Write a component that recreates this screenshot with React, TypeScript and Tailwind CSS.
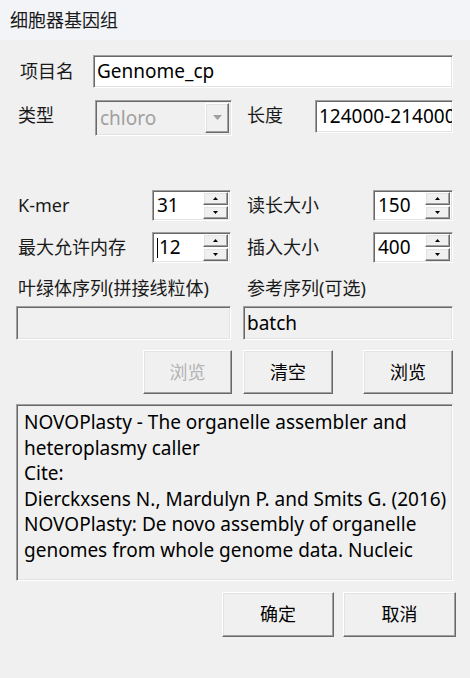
import React from "react";

const FONT = { fontFamily: '"Noto Sans", "Noto Sans CJK SC", sans-serif' };

const sunken =
  "border border-t-[#a0a0a0] border-l-[#a0a0a0] border-b-white border-r-white shadow-[inset_1px_1px_0_#696969,inset_-1px_-1px_0_#e3e3e3]";
const raised =
  "border border-t-white border-l-white border-b-[#696969] border-r-[#696969] shadow-[inset_-1px_-1px_0_#a0a0a0,inset_1px_1px_0_#e3e3e3] bg-[#f0f0f0]";

const Arrow = ({ up, color = "#000", w = 5 }: { up?: boolean; color?: string; w?: number }) => (
  <svg width={w} height={Math.ceil(w / 2) + 1} viewBox={`0 0 ${w} ${Math.ceil(w / 2) + 1}`}>
    {up ? (
      <polygon points={`0,${Math.ceil(w / 2)} ${w},${Math.ceil(w / 2)} ${w / 2},0`} fill={color} />
    ) : (
      <polygon points={`0,0 ${w},0 ${w / 2},${Math.ceil(w / 2)}`} fill={color} />
    )}
  </svg>
);

const Spin = ({ value, width, caret }: { value: string; width: string; caret?: boolean }) => (
  <div className={`${sunken} ${width} h-[31px] bg-white flex items-center pl-[4px] pr-[2px]`}>
    <div className="flex-1 flex items-center text-[19px] text-black leading-none">
      {caret && <span className="w-px h-[20px] bg-black mr-[1px]" />}
      {value}
    </div>
    <div className="flex flex-col gap-px">
      <div className={`${raised} w-[25px] h-[13px] flex items-center justify-center`}>
        <Arrow up />
      </div>
      <div className={`${raised} w-[25px] h-[13px] flex items-center justify-center`}>
        <Arrow />
      </div>
    </div>
  </div>
);

export default function App() {
  return (
    <div className="w-[470px] h-[678px] bg-[#f0f0f0] text-[#1a1a1a] overflow-hidden" style={FONT}>
      {/* title bar */}
      <div className="h-[40px] bg-[#f3f4f8] flex items-center pl-[10px] text-[18px]">细胞器基因组</div>

      {/* project name */}
      <div className="flex items-center mt-[15px] pl-[20px] h-[33px]">
        <span className="w-[73px] text-[18px]">项目名</span>
        <div className={`${sunken} w-[360px] h-[33px] bg-white flex items-center pl-[3px] text-[19px] text-black`}>
          Gennome_cp
        </div>
      </div>

      {/* type / length */}
      <div className="flex items-start mt-[12px] pl-[18px] h-[36px]">
        <span className="w-[77px] text-[18px] leading-[30px]">类型</span>
        <div className={`${sunken} w-[137px] h-[36px] bg-[#f0f0f0] flex items-center pl-[4px] pr-[2px]`}>
          <span className="flex-1 text-[19px] text-[#a0a0a0]">chloro</span>
          <div className={`${raised} w-[24px] h-[30px] flex items-center justify-center`}>
            <Arrow color="#a0a0a0" w={9} />
          </div>
        </div>
        <span className="ml-[15px] w-[68px] text-[18px] leading-[30px]">长度</span>
        <div className={`${sunken} w-[138px] h-[33px] bg-white flex items-center pl-[3px] text-[19px] text-black overflow-hidden whitespace-nowrap`}>
          124000-214000
        </div>
      </div>

      {/* kmer / read length */}
      <div className="flex items-center mt-[54px] pl-[18px] h-[31px]">
        <span className="w-[134px] text-[18px]">K-mer</span>
        <Spin value="31" width="w-[79px]" />
        <span className="ml-[16px] w-[126px] text-[18px]">读长大小</span>
        <Spin value="150" width="w-[80px]" />
      </div>

      {/* memory / insert size */}
      <div className="flex items-center mt-[11px] pl-[18px] h-[31px]">
        <span className="w-[134px] text-[18px]">最大允许内存</span>
        <Spin value="12" width="w-[79px]" caret />
        <span className="ml-[16px] w-[126px] text-[18px]">插入大小</span>
        <Spin value="400" width="w-[80px]" />
      </div>

      {/* sequence labels */}
      <div className="flex items-center mt-[13px] pl-[18px] h-[24px] text-[18px]">
        <span className="w-[229px]">叶绿体序列(拼接线粒体)</span>
        <span>参考序列(可选)</span>
      </div>

      {/* sequence inputs */}
      <div className="flex mt-[6px] pl-[16px] gap-[12px] h-[34px]">
        <div className={`${sunken} w-[215px] h-[34px] bg-[#f0f0f0]`} />
        <div className={`${sunken} w-[210px] h-[34px] bg-[#f0f0f0] flex items-center pl-[3px] text-[19px] text-black`}>
          batch
        </div>
      </div>

      {/* browse buttons */}
      <div className="flex mt-[10px] pl-[143px] h-[44px] text-[18px]">
        <button className={`${raised} w-[89px] h-[44px] text-[#b4b4b4]`}>浏览</button>
        <button className={`${raised} ml-[11px] w-[90px] h-[44px] text-black`}>清空</button>
        <button className={`${raised} ml-[30px] w-[90px] h-[44px] text-black`}>浏览</button>
      </div>

      {/* info text */}
      <div className={`${sunken} mt-[10px] ml-[16px] w-[437px] h-[177px] bg-[#f0f0f0] pl-[7px] pt-[5px] text-[19px] leading-[25.5px] text-black`}>
        NOVOPlasty - The organelle assembler and
        <br />
        heteroplasmy caller
        <br />
        Cite:
        <br />
        Dierckxsens N., Mardulyn P. and Smits G. (2016)
        <br />
        NOVOPlasty: De novo assembly of organelle
        <br />
        genomes from whole genome data. Nucleic
      </div>

      {/* ok / cancel */}
      <div className="flex mt-[11px] pl-[222px] h-[45px] text-[18px]">
        <button className={`${raised} w-[112px] h-[45px] text-black`}>确定</button>
        <button className={`${raised} ml-[9px] w-[113px] h-[45px] text-black`}>取消</button>
      </div>
    </div>
  );
}
